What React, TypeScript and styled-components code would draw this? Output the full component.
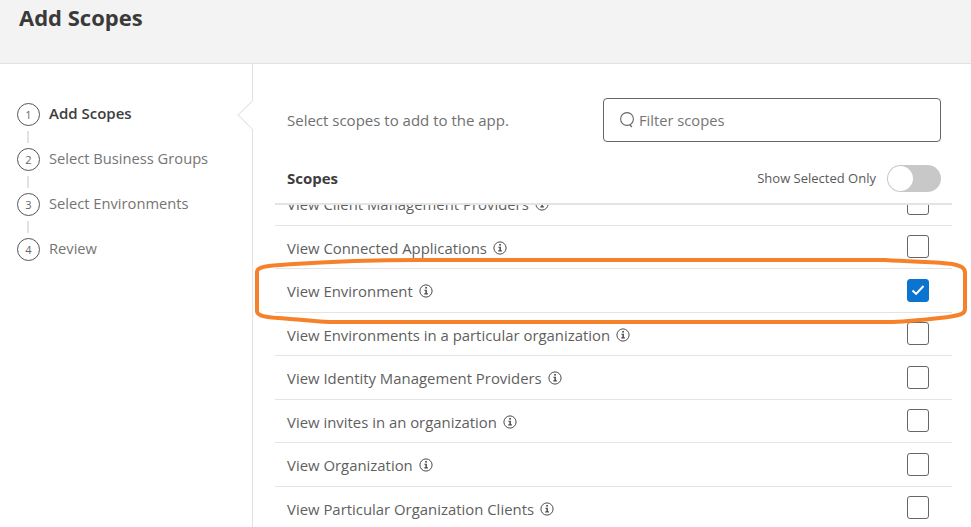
import React from "react";
import styled, { createGlobalStyle } from "styled-components";

const steps = ["Add Scopes", "Select Business Groups", "Select Environments", "Review"];

const scopes = [
	{ name: "View Client Management Providers" },
	{ name: "View Connected Applications" },
	{ name: "View Environment", checked: true },
	{ name: "View Environments in a particular organization" },
	{ name: "View Identity Management Providers" },
	{ name: "View invites in an organization" },
	{ name: "View Organization" },
	{ name: "View Particular Organization Clients" },
];

const InfoIcon = () => (
	<InfoSvg viewBox="0 0 14 14" aria-hidden="true">
		<circle cx="7" cy="7" r="6.1" fill="none" stroke="#4a4a4a" strokeWidth="1" />
		<rect x="6.2" y="3" width="1.7" height="1.6" fill="#4a4a4a" />
		<path d="M5.4 5.7h2.5v3.6h1v1.1H5.3V9.3h1.1V6.8h-1z" fill="#4a4a4a" />
	</InfoSvg>
);

const App: React.FC = () => {
	return (
		<Page>
			<GlobalStyle />
			<Header>
				<Title>Add Scopes</Title>
			</Header>

			<Body>
				<Sidebar>
					{steps.map((step, i) => (
						<React.Fragment key={step}>
							{i > 0 && <Connector />}
							<Step>
								<StepNumber>{i + 1}</StepNumber>
								<StepLabel $active={i === 0}>{step}</StepLabel>
							</Step>
						</React.Fragment>
					))}
					<Pointer />
				</Sidebar>

				<Main>
					<TopRow>
						<Hint>Select scopes to add to the app.</Hint>
						<FilterBox>
							<svg width="17" height="18" viewBox="0 0 17 18" aria-hidden="true">
								<circle cx="8" cy="8" r="6.4" fill="none" stroke="#666" strokeWidth="1.1" />
								<path d="M10.8 13.6l2 2.4" fill="none" stroke="#666" strokeWidth="1.3" />
							</svg>
							<FilterText>Filter scopes</FilterText>
						</FilterBox>
					</TopRow>

					<ListHead>
						<ListTitle>Scopes</ListTitle>
						<ToggleArea>
							<ToggleLabel>Show Selected Only</ToggleLabel>
							<Toggle>
								<Knob />
							</Toggle>
						</ToggleArea>
					</ListHead>

					<ScopeViewport>
						<ScopeList>
							{scopes.map((scope) => (
								<ScopeRow key={scope.name}>
									<ScopeName>
										{scope.name}
										<InfoIcon />
									</ScopeName>
									<Checkbox $checked={scope.checked}>
										{scope.checked && (
											<svg width="14" height="12" viewBox="0 0 14 12" aria-hidden="true">
												<path d="M1.5 6.5l3.6 3.4L12.5 2" fill="none" stroke="#fff" strokeWidth="2" />
											</svg>
										)}
									</Checkbox>
								</ScopeRow>
							))}
						</ScopeList>
					</ScopeViewport>
				</Main>
			</Body>

			{/* hand drawn highlight on top of the screenshot */}
			<Highlight viewBox="0 0 971 527" aria-hidden="true">
				<path
					d="M257 272C257 268 262 266 280 265C310 263 345 260 420 260L885 260C915 262 940 262 952 264C962 266 965 268 965 273L965 309C965 314 960 315 948 317C930 319 915 321 893 322L330 322C310 321 295 319 278 318C262 317 257 315 257 311Z"
					fill="none"
					stroke="#f5822b"
					strokeWidth="4"
				/>
			</Highlight>
		</Page>
	);
};

const GlobalStyle = createGlobalStyle`
	html, body {
		margin: 0;
		padding: 0;
		background: #fff;
		overflow: hidden;
	}

	* {
		box-sizing: border-box;
	}
`;

const Page = styled.div`
	position: relative;
	width: 971px;
	height: 527px;
	overflow: hidden;
	display: flex;
	flex-direction: column;
	font-family: "Open Sans", "Noto Sans", sans-serif;
	color: #5f5f5f;
`;

const Header = styled.header`
	height: 64px;
	flex: none;
	padding: 2px 0 0 19px;
	background-color: #f3f3f3;
	border-bottom: 1px solid #e2e2e2;
`;

const Title = styled.h1`
	margin: 0;
	font-size: 22px;
	line-height: 30px;
	font-weight: 700;
	color: #3a3a3a;
`;

const Body = styled.div`
	flex: 1;
	display: flex;
	min-height: 0;
`;

const Sidebar = styled.aside`
	position: relative;
	width: 253px;
	flex: none;
	padding: 39px 0 0 17px;
	border-right: 1px solid #e2e2e2;
`;

const Step = styled.div`
	display: flex;
	align-items: center;
	gap: 9px;
	height: 23px;
`;

const StepNumber = styled.span`
	width: 23px;
	height: 23px;
	flex: none;
	display: flex;
	align-items: center;
	justify-content: center;
	border: 1px solid #555;
	border-radius: 50%;
	font-size: 11px;
	color: #666;
`;

const StepLabel = styled.span<{ $active?: boolean }>`
	margin-top: -3px;
	font-size: ${(p) => (p.$active ? "15px" : "14.7px")};
	line-height: 20px;
	font-weight: ${(p) => (p.$active ? 600 : 400)};
	color: ${(p) => (p.$active ? "#3d3d3d" : "#757575")};
`;

const Connector = styled.div`
	width: 2px;
	height: 22px;
	margin-left: 10px;
	padding: 5px 0;
	background-color: #e2e2e2;
	background-clip: content-box;
`;

const Pointer = styled.span`
	position: absolute;
	top: 36px;
	right: -1px;
	width: 15px;
	height: 30px;
	background: #fff;
	border-right: 1px solid #fff;

	&::before {
		content: "";
		position: absolute;
		top: 4px;
		left: 4px;
		width: 21px;
		height: 21px;
		background: #fff;
		border-left: 1px solid #e2e2e2;
		border-bottom: 1px solid #e2e2e2;
		transform: rotate(45deg);
	}
`;

const Main = styled.main`
	flex: 1;
	min-width: 0;
	padding: 34px 19px 0 22px;
	display: flex;
	flex-direction: column;
`;

const TopRow = styled.div`
	display: flex;
	align-items: center;
	justify-content: space-between;
	height: 44px;
	padding: 0 11px 0 12px;
`;

const Hint = styled.p`
	margin: 0;
	font-size: 15px;
	color: #707070;
`;

const FilterBox = styled.div`
	width: 338px;
	height: 44px;
	display: flex;
	align-items: center;
	gap: 3px;
	padding: 0 15px;
	border: 1px solid #666;
	border-radius: 4px;
`;

const FilterText = styled.span`
	font-size: 14.7px;
	color: #757575;
`;

const ListHead = styled.div`
	display: flex;
	align-items: center;
	justify-content: space-between;
	height: 43px;
	margin-top: 18px;
	padding: 5px 11px 11px 12px;
`;

const ListTitle = styled.span`
	margin-top: -2px;
	font-size: 15px;
	font-weight: 700;
	color: #3d3d3d;
`;

const ToggleArea = styled.div`
	display: flex;
	align-items: center;
	gap: 11px;
`;

const ToggleLabel = styled.span`
	margin-top: -2px;
	font-size: 13px;
	color: #5a5a5a;
`;

const Toggle = styled.div`
	width: 54px;
	height: 27px;
	padding: 1px;
	border-radius: 14px;
	background-color: #c8c8c8;
`;

const Knob = styled.div`
	width: 25px;
	height: 25px;
	border-radius: 50%;
	background-color: #fff;
`;

const ScopeViewport = styled.div`
	flex: 1;
	min-height: 0;
	overflow: hidden;
	border-top: 2px solid #e4e4e4;
`;

const ScopeList = styled.div`
	margin-top: -23px;
`;

const ScopeRow = styled.div`
	height: 43.5px;
	display: flex;
	align-items: center;
	justify-content: space-between;
	padding: 0 23px 0 12px;
	border-bottom: 1px solid #e4e4e4;
`;

const ScopeName = styled.span`
	display: flex;
	align-items: center;
	gap: 6px;
	padding-top: 2px;
	font-size: 14.9px;
	color: #5f5f5f;
`;

const InfoSvg = styled.svg`
	width: 14px;
	height: 14px;
	flex: none;
`;

const Checkbox = styled.span<{ $checked?: boolean }>`
	width: 22px;
	height: 23px;
	display: flex;
	align-items: center;
	justify-content: center;
	border-radius: 3px;
	border: 1px solid ${(p) => (p.$checked ? "#0b74d1" : "#666")};
	background-color: ${(p) => (p.$checked ? "#0b74d1" : "#fff")};
`;

const Highlight = styled.svg`
	position: absolute;
	inset: 0;
	width: 971px;
	height: 527px;
	pointer-events: none;
`;

export default App;
